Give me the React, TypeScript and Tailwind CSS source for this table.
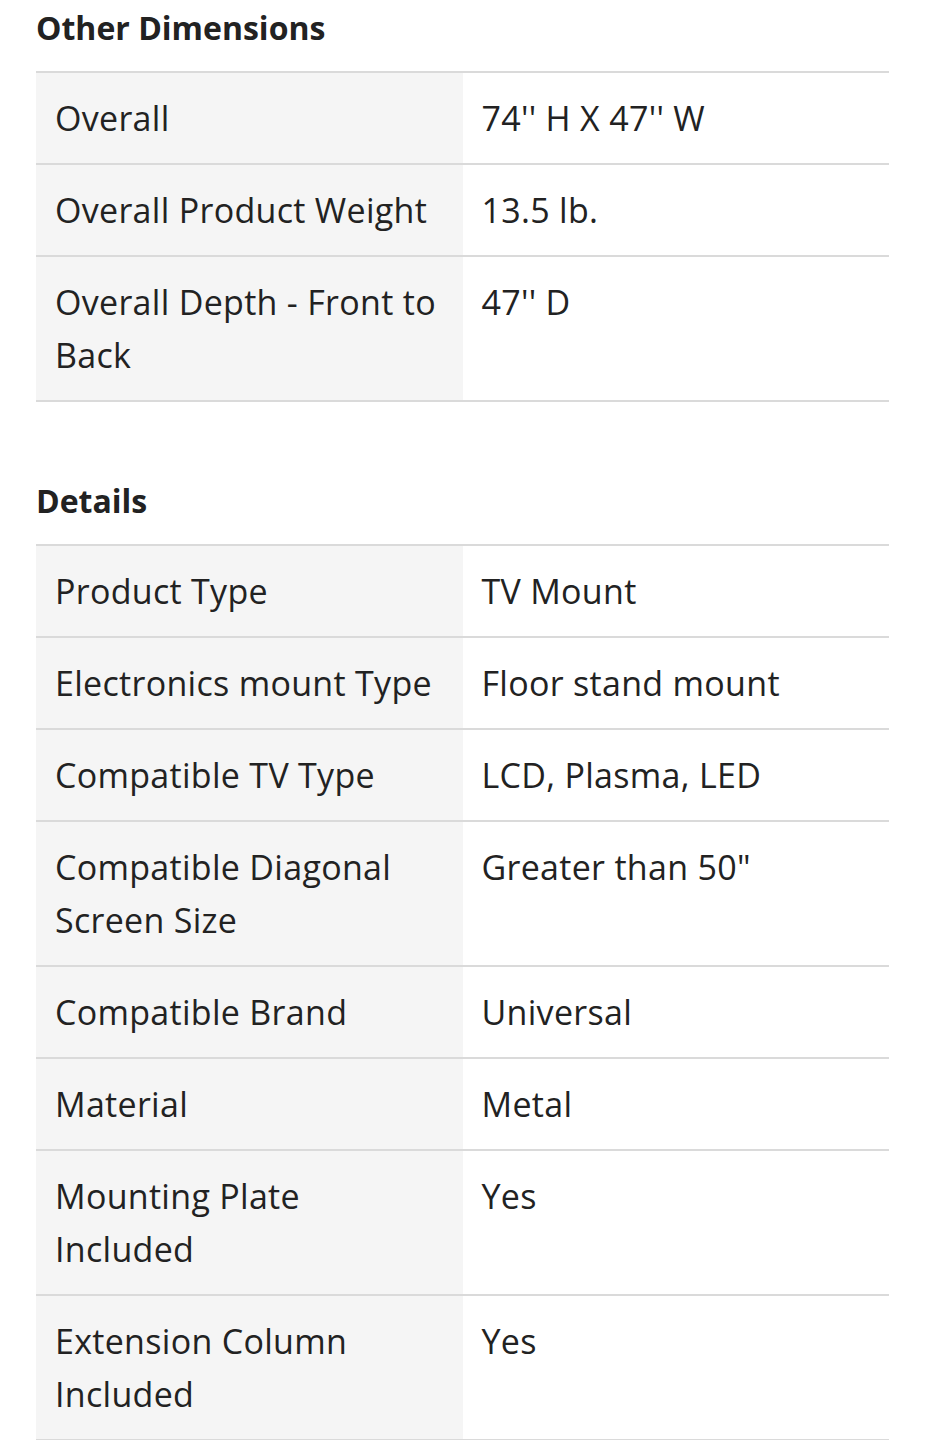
import React from "react";

const sections: { title: string; rows: [string, string][] }[] = [
  {
    title: "Other Dimensions",
    rows: [
      ["Overall", "74'' H X 47'' W"],
      ["Overall Product Weight", "13.5 lb."],
      ["Overall Depth - Front to Back", "47'' D"],
    ],
  },
  {
    title: "Details",
    rows: [
      ["Product Type", "TV Mount"],
      ["Electronics mount Type", "Floor stand mount"],
      ["Compatible TV Type", "LCD, Plasma, LED"],
      ["Compatible Diagonal Screen Size", 'Greater than 50"'],
      ["Compatible Brand", "Universal"],
      ["Material", "Metal"],
      ["Mounting Plate Included", "Yes"],
      ["Extension Column Included", "Yes"],
    ],
  },
];

export default function App() {
  return (
    <div
      className="w-[925px] min-h-[1440px] bg-white px-[36px] text-[#222222]"
      style={{ fontFamily: "'Open Sans', 'Noto Sans', sans-serif" }}
    >
      {sections.map((s, i) => (
        <section key={s.title} className={i === 0 ? "" : "mt-[71px]"}>
          <h2 className="text-[32px] font-bold leading-[55px] pb-[16px]">{s.title}</h2>
          <div className="border-t-2 border-[#dadada]">
            {s.rows.map(([k, v]) => (
              <div
                key={k}
                className="grid grid-cols-2 border-b-2 border-[#dadada] text-[34px] leading-[53px] tracking-[0.3px]"
              >
                <div className="bg-[#f5f5f5] pl-[19px] pr-[20px] pt-[19px] pb-[18px]">{k}</div>
                <div className="pl-[19px] pr-[16px] pt-[19px] pb-[18px]">{v}</div>
              </div>
            ))}
          </div>
        </section>
      ))}
    </div>
  );
}
